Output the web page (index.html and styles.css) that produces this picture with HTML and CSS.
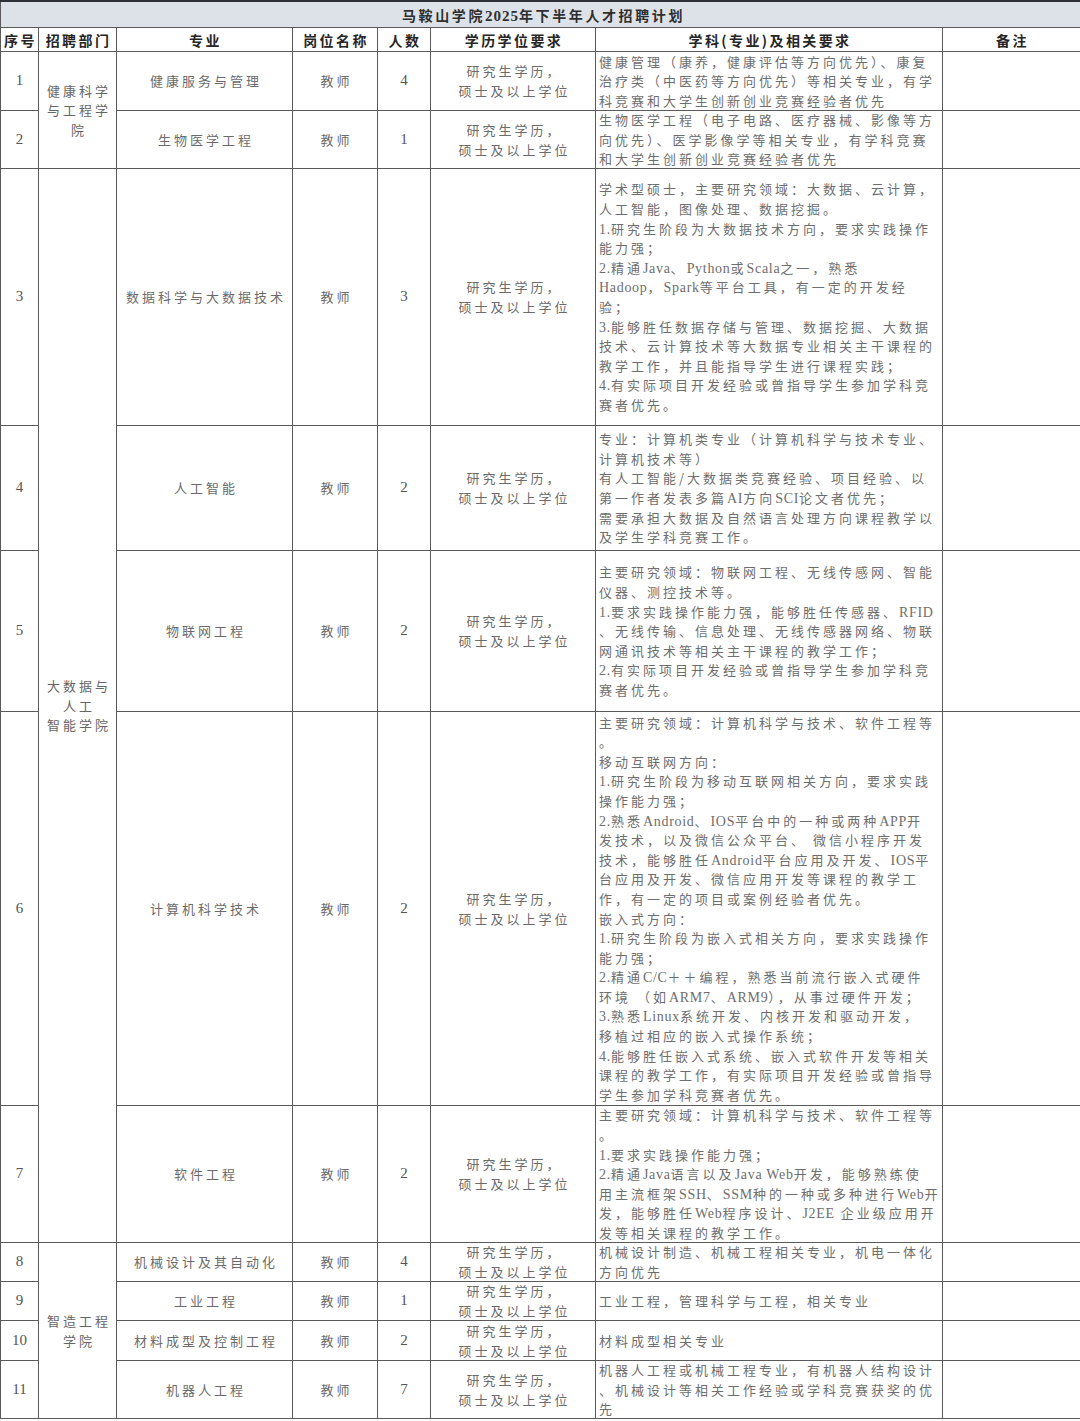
FILE: index.html
```html
<!DOCTYPE html>
<html lang="zh-CN">
<head>
<meta charset="utf-8">
<title>马鞍山学院2025年下半年人才招聘计划</title>
<link rel="stylesheet" href="styles.css">
</head>
<body>
<div class="sheet">
  <div class="title"><div>马鞍山学院<span class="en">2025</span>年下半年人才招聘计划</div></div>

  <div class="th">序号</div>
  <div class="th">招聘部门</div>
  <div class="th">专业</div>
  <div class="th">岗位名称</div>
  <div class="th">人数</div>
  <div class="th">学历学位要求</div>
  <div class="th">学科(专业)及相关要求</div>
  <div class="th">备注</div>

  <!-- 1 -->
  <div class="td num">1</div>
  <div class="td dept span2">健康科学<br>与工程学<br>院</div>
  <div class="td">健康服务与管理</div>
  <div class="td">教师</div>
  <div class="td num">4</div>
  <div class="td">研究生学历，<br>硕士及以上学位</div>
  <div class="td req"><div class="txt">健康管理（康养，健康评估等方向优先）、康复<br>治疗类（中医药等方向优先）等相关专业，有学<br>科竞赛和大学生创新创业竞赛经验者优先</div></div>
  <div class="td"></div>

  <!-- 2 -->
  <div class="td num">2</div>
  <div class="td">生物医学工程</div>
  <div class="td">教师</div>
  <div class="td num">1</div>
  <div class="td">研究生学历，<br>硕士及以上学位</div>
  <div class="td req"><div class="txt">生物医学工程（电子电路、医疗器械、影像等方<br>向优先）、医学影像学等相关专业，有学科竞赛<br>和大学生创新创业竞赛经验者优先</div></div>
  <div class="td"></div>

  <!-- 3 -->
  <div class="td num">3</div>
  <div class="td dept span5">大数据与<br>人工<br>智能学院</div>
  <div class="td">数据科学与大数据技术</div>
  <div class="td">教师</div>
  <div class="td num">3</div>
  <div class="td">研究生学历，<br>硕士及以上学位</div>
  <div class="td req"><div class="txt">学术型硕士，主要研究领域：大数据、云计算，<br>人工智能，图像处理、数据挖掘。<br><span class="en">1.</span>研究生阶段为大数据技术方向，要求实践操作<br>能力强；<br><span class="en">2.</span>精通<span class="en">Java</span>、<span class="en">Python</span>或<span class="en">Scala</span>之一，熟悉<br><span class="en">Hadoop</span>，<span class="en">Spark</span>等平台工具，有一定的开发经<br>验；<br><span class="en">3.</span>能够胜任数据存储与管理、数据挖掘、大数据<br>技术、云计算技术等大数据专业相关主干课程的<br>教学工作，并且能指导学生进行课程实践；<br><span class="en">4.</span>有实际项目开发经验或曾指导学生参加学科竞<br>赛者优先。</div></div>
  <div class="td"></div>

  <!-- 4 -->
  <div class="td num">4</div>
  <div class="td">人工智能</div>
  <div class="td">教师</div>
  <div class="td num">2</div>
  <div class="td">研究生学历，<br>硕士及以上学位</div>
  <div class="td req"><div class="txt">专业：计算机类专业（计算机科学与技术专业、<br>计算机技术等）<br>有人工智能/大数据类竞赛经验、项目经验、以<br>第一作者发表多篇<span class="en">AI</span>方向<span class="en">SCI</span>论文者优先；<br>需要承担大数据及自然语言处理方向课程教学以<br>及学生学科竞赛工作。</div></div>
  <div class="td"></div>

  <!-- 5 -->
  <div class="td num">5</div>
  <div class="td">物联网工程</div>
  <div class="td">教师</div>
  <div class="td num">2</div>
  <div class="td">研究生学历，<br>硕士及以上学位</div>
  <div class="td req"><div class="txt">主要研究领域：物联网工程、无线传感网、智能<br>仪器、测控技术等。<br><span class="en">1.</span>要求实践操作能力强，能够胜任传感器、<span class="en">RFID</span><br>、无线传输、信息处理、无线传感器网络、物联<br>网通讯技术等相关主干课程的教学工作；<br><span class="en">2.</span>有实际项目开发经验或曾指导学生参加学科竞<br>赛者优先。</div></div>
  <div class="td"></div>

  <!-- 6 -->
  <div class="td num">6</div>
  <div class="td">计算机科学技术</div>
  <div class="td">教师</div>
  <div class="td num">2</div>
  <div class="td">研究生学历，<br>硕士及以上学位</div>
  <div class="td req"><div class="txt">主要研究领域：计算机科学与技术、软件工程等<br>。<br>移动互联网方向：<br><span class="en">1.</span>研究生阶段为移动互联网相关方向，要求实践<br>操作能力强；<br><span class="en">2.</span>熟悉<span class="en">Android</span>、<span class="en">IOS</span>平台中的一种或两种<span class="en">APP</span>开<br>发技术，以及微信公众平台、 微信小程序开发<br>技术，能够胜任<span class="en">Android</span>平台应用及开发、<span class="en">IOS</span>平<br>台应用及开发、微信应用开发等课程的教学工<br>作，有一定的项目或案例经验者优先。<br>嵌入式方向：<br><span class="en">1.</span>研究生阶段为嵌入式相关方向，要求实践操作<br>能力强；<br><span class="en">2.</span>精通<span class="en">C/C</span>＋＋编程，熟悉当前流行嵌入式硬件<br>环境 （如<span class="en">ARM7</span>、<span class="en">ARM9</span>），从事过硬件开发；<br><span class="en">3.</span>熟悉<span class="en">Linux</span>系统开发、内核开发和驱动开发，<br>移植过相应的嵌入式操作系统；<br><span class="en">4.</span>能够胜任嵌入式系统、嵌入式软件开发等相关<br>课程的教学工作，有实际项目开发经验或曾指导<br>学生参加学科竞赛者优先。</div></div>
  <div class="td"></div>

  <!-- 7 -->
  <div class="td num">7</div>
  <div class="td">软件工程</div>
  <div class="td">教师</div>
  <div class="td num">2</div>
  <div class="td">研究生学历，<br>硕士及以上学位</div>
  <div class="td req"><div class="txt">主要研究领域：计算机科学与技术、软件工程等<br>。<br><span class="en">1.</span>要求实践操作能力强；<br><span class="en">2.</span>精通<span class="en">Java</span>语言以及<span class="en">Java Web</span>开发，能够熟练使<br>用主流框架<span class="en">SSH</span>、<span class="en">SSM</span>种的一种或多种进行<span class="en">Web</span>开<br>发，能够胜任<span class="en">Web</span>程序设计、<span class="en">J2EE</span> 企业级应用开<br>发等相关课程的教学工作。</div></div>
  <div class="td"></div>

  <!-- 8 -->
  <div class="td num">8</div>
  <div class="td dept span4">智造工程<br>学院</div>
  <div class="td">机械设计及其自动化</div>
  <div class="td">教师</div>
  <div class="td num">4</div>
  <div class="td">研究生学历，<br>硕士及以上学位</div>
  <div class="td req"><div class="txt">机械设计制造、机械工程相关专业，机电一体化<br>方向优先</div></div>
  <div class="td"></div>

  <!-- 9 -->
  <div class="td num">9</div>
  <div class="td">工业工程</div>
  <div class="td">教师</div>
  <div class="td num">1</div>
  <div class="td">研究生学历，<br>硕士及以上学位</div>
  <div class="td req"><div class="txt">工业工程，管理科学与工程，相关专业</div></div>
  <div class="td"></div>

  <!-- 10 -->
  <div class="td num">10</div>
  <div class="td">材料成型及控制工程</div>
  <div class="td">教师</div>
  <div class="td num">2</div>
  <div class="td">研究生学历，<br>硕士及以上学位</div>
  <div class="td req"><div class="txt">材料成型相关专业</div></div>
  <div class="td"></div>

  <!-- 11 -->
  <div class="td num">11</div>
  <div class="td">机器人工程</div>
  <div class="td">教师</div>
  <div class="td num">7</div>
  <div class="td">研究生学历，<br>硕士及以上学位</div>
  <div class="td req"><div class="txt">机器人工程或机械工程专业，有机器人结构设计<br>、机械设计等相关工作经验或学科竞赛获奖的优<br>先</div></div>
  <div class="td"></div>
</div>
</body>
</html>
```

FILE: styles.css
```css
html, body {
  margin: 0;
  padding: 0;
  background: #ffffff;
}

body {
  width: 1080px;
  height: 1421px;
  overflow: hidden;
  font-family: "Liberation Serif", "Noto Sans CJK SC", serif;
}

.sheet {
  display: grid;
  grid-template-columns: 37px 77px 175px 84px 52px 164px 346px 137px;
  grid-template-rows: 25px 23px 58px 57px 256px 124px 160px 393px 136px 38px 38px 39px 57px;
  gap: 1px;
  background: #5a5a5a;
  border-top: 2px solid #2e3238;
  padding: 0 0 1px 1px;
  width: 1079px;
}

.title {
  grid-column: 1 / -1;
  background: #dde2e8;
  display: flex;
  align-items: center;
  justify-content: center;
  font-family: "Noto Sans CJK SC", sans-serif;
  font-weight: 700;
  font-size: 14px;
  letter-spacing: 2.6px;
  color: #2f2f2f;
  padding-left: 6px;
  white-space: nowrap;
}

.title .en {
  font-family: "Liberation Serif", serif;
  font-size: 15px;
  letter-spacing: 1px;
}

.th {
  background: #ffffff;
  display: flex;
  align-items: center;
  justify-content: center;
  font-family: "Noto Sans CJK SC", sans-serif;
  font-weight: 700;
  font-size: 14px;
  letter-spacing: 2.4px;
  padding-left: 2px;
  color: #262626;
  white-space: nowrap;
  overflow: hidden;
}

.td {
  background: #ffffff;
  display: flex;
  align-items: center;
  justify-content: center;
  text-align: center;
  font-family: "Noto Sans CJK SC", sans-serif;
  font-size: 13px;
  line-height: 19.6px;
  letter-spacing: 3px;
  padding-left: 3px;
  color: #6b6b6b;
  white-space: nowrap;
  overflow: hidden;
}

.td .en {
  font-family: "Liberation Serif", serif;
  font-size: 14px;
  line-height: 1;
  letter-spacing: 0.7px;
}

.num {
  font-family: "Liberation Serif", serif;
  font-size: 15px;
  letter-spacing: 0;
  padding-left: 0;
  color: #555555;
}

.dept {
  color: #666666;
}

.span2 { grid-row: span 2; }
.span5 { grid-row: span 5; }
.span4 { grid-row: span 4; }

.req {
  justify-content: flex-start;
  text-align: left;
  padding-left: 3px;
  color: #6e6e6e;
}

.txt {
  flex: none;
}
```
